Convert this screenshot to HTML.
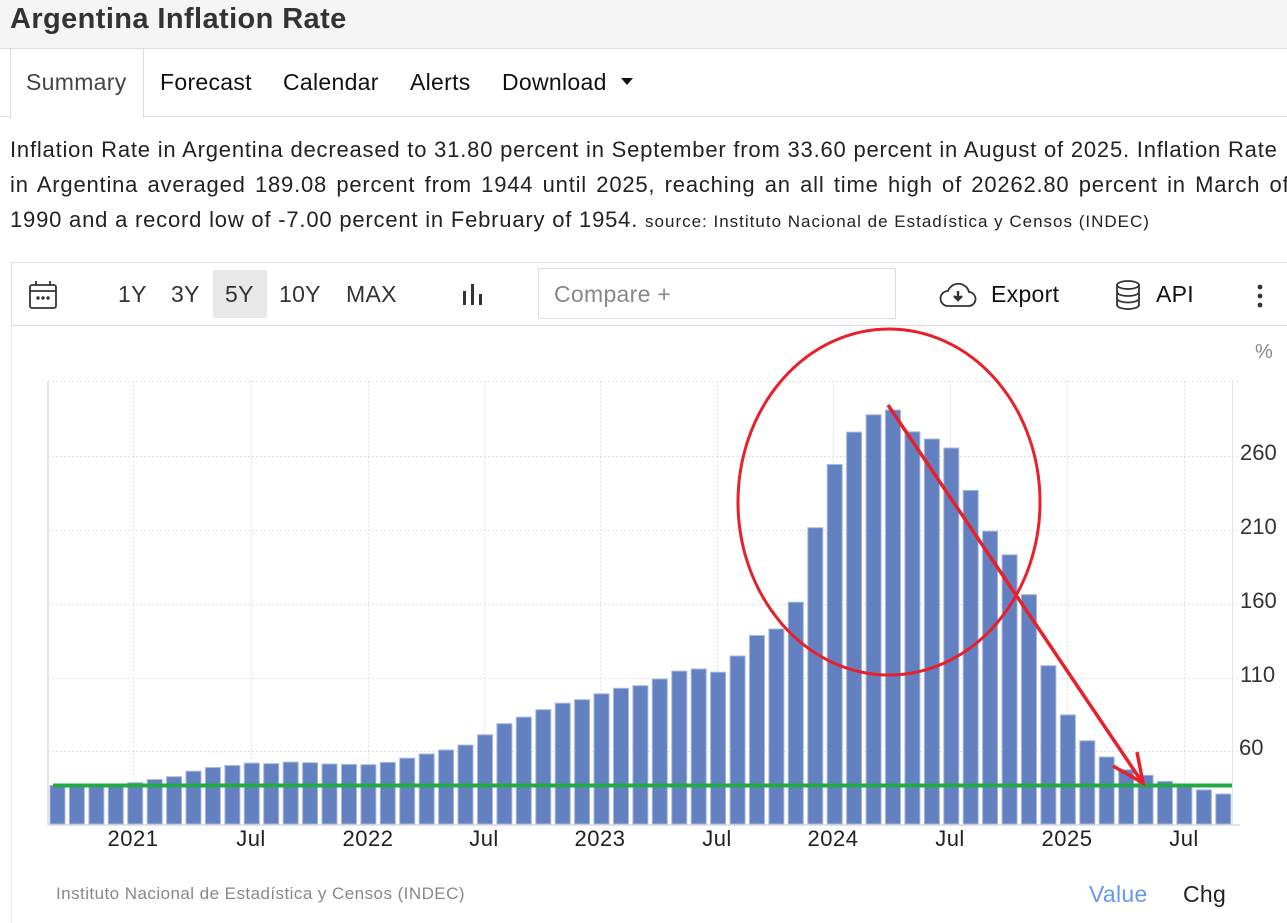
<!DOCTYPE html>
<html><head><meta charset="utf-8"><style>
*{margin:0;padding:0;box-sizing:border-box}
body{width:1287px;height:923px;overflow:hidden;background:#fff;font-family:"Liberation Sans",sans-serif;color:#222;position:relative}
.a{position:absolute;white-space:nowrap}
.t{font-size:23px;letter-spacing:.3px}
</style></head><body>
<div class="a" style="left:0;top:0;width:1287px;height:49px;background:#f5f5f5;border-bottom:1px solid #ddd"></div>
<div class="a" style="left:10px;top:3px;font-size:29px;font-weight:bold;color:#333;letter-spacing:.4px">Argentina Inflation Rate</div>
<div class="a" style="left:0;top:116px;width:1287px;height:1px;background:#ddd"></div>
<div class="a" style="left:10px;top:49px;width:134px;height:69px;background:#fff;border-left:1px solid #ddd;border-right:1px solid #ddd"></div>
<div class="a t" style="left:26px;top:69px;color:#444">Summary</div>
<div class="a t" style="left:160px;top:69px;color:#111">Forecast</div>
<div class="a t" style="left:283px;top:69px;color:#111">Calendar</div>
<div class="a t" style="left:410px;top:69px;color:#111">Alerts</div>
<div class="a t" style="left:502px;top:69px;color:#111">Download</div>
<div class="a" style="left:621px;top:78px;width:0;height:0;border-left:6px solid transparent;border-right:6px solid transparent;border-top:7px solid #111"></div>
<div class="a" style="left:10px;top:132px;font-size:22px;line-height:35px;color:#222;letter-spacing:.8px">Inflation Rate in Argentina decreased to 31.80 percent in September from 33.60 percent in August of 2025. Inflation Rate</div>
<div class="a" style="left:10px;top:167px;font-size:22px;line-height:35px;color:#222;letter-spacing:.8px;word-spacing:2.4px">in Argentina averaged 189.08 percent from 1944 until 2025, reaching an all time high of 20262.80 percent in March of</div>
<div class="a" style="left:10px;top:202px;font-size:22px;line-height:35px;color:#222;letter-spacing:.8px">1990 and a record low of -7.00 percent in February of 1954. <span style="font-size:17px;letter-spacing:1px">source: Instituto Nacional de Estadística y Censos (INDEC)</span></div>
<div class="a" style="left:11px;top:262px;width:1290px;height:64px;border:1px solid #ddd"></div>
<div class="a" style="left:11px;top:325px;width:1px;height:598px;background:#eee"></div>
<svg class="a" style="left:28px;top:280px" width="30" height="30" viewBox="0 0 30 30" fill="none" stroke="#333" stroke-width="1.8"><rect x="2" y="5" width="26" height="23" rx="2"/><line x1="2" y1="11" x2="28" y2="11"/><line x1="8" y1="1" x2="8" y2="5"/><line x1="22" y1="1" x2="22" y2="5"/><circle cx="10" cy="18" r=".8" fill="#333"/><circle cx="15" cy="18" r=".8" fill="#333"/><circle cx="20" cy="18" r=".8" fill="#333"/></svg>
<div class="a" style="left:213px;top:270px;width:54px;height:48px;background:#e8e8e8"></div>
<div class="a t" style="left:118px;top:281px;color:#333">1Y</div>
<div class="a t" style="left:171px;top:281px;color:#333">3Y</div>
<div class="a t" style="left:225px;top:281px;color:#333">5Y</div>
<div class="a t" style="left:279px;top:281px;color:#333">10Y</div>
<div class="a t" style="left:346px;top:281px;color:#333">MAX</div>
<svg class="a" style="left:462px;top:282px" width="24" height="24"><rect x="1" y="9" width="3" height="14" fill="#333"/><rect x="9" y="2" width="3" height="21" fill="#333"/><rect x="17" y="12" width="3" height="11" fill="#333"/></svg>
<div class="a" style="left:538px;top:268px;width:358px;height:51px;border:1px solid #ddd"></div>
<div class="a t" style="left:554px;top:281px;color:#888">Compare +</div>
<svg class="a" style="left:939px;top:282px" width="38" height="26" viewBox="0 0 38 26" fill="none" stroke="#333" stroke-width="1.8"><path d="M9 24 H29 A7 7 0 0 0 30 10 A11 11 0 0 0 9 9 A7.5 7.5 0 0 0 9 24 Z"/><path d="M19 9 V18 M15 14 L19 18 L23 14" stroke-width="2.4" fill="#333"/></svg>
<div class="a t" style="left:991px;top:281px;color:#111">Export</div>
<svg class="a" style="left:1114px;top:280px" width="28" height="30" viewBox="0 0 28 30" fill="none" stroke="#333" stroke-width="1.8"><ellipse cx="14" cy="5" rx="11" ry="4"/><path d="M3 5 V25 A11 4 0 0 0 25 25 V5 M3 12 A11 4 0 0 0 25 12 M3 18.5 A11 4 0 0 0 25 18.5"/></svg>
<div class="a t" style="left:1156px;top:281px;color:#111">API</div>
<svg class="a" style="left:1256px;top:284px" width="8" height="24"><circle cx="4" cy="3" r="2.4" fill="#333"/><circle cx="4" cy="12" r="2.4" fill="#333"/><circle cx="4" cy="21" r="2.4" fill="#333"/></svg>
<div class="a" style="left:1255px;top:341px;font-size:20px;color:#888">%</div>
<svg class="a" style="left:0;top:0" width="1287" height="923">
<g stroke="#e2e2e2" stroke-dasharray="2,2" stroke-width="1">
<line x1="48" y1="381.5" x2="1240" y2="381.5"/><line x1="48" y1="456.5" x2="1240" y2="456.5"/><line x1="48" y1="530.5" x2="1240" y2="530.5"/><line x1="48" y1="604.5" x2="1240" y2="604.5"/><line x1="48" y1="678.5" x2="1240" y2="678.5"/><line x1="48" y1="751.5" x2="1240" y2="751.5"/>
<line x1="133.5" y1="381" x2="133.5" y2="824"/><line x1="251.5" y1="381" x2="251.5" y2="824"/><line x1="368.5" y1="381" x2="368.5" y2="824"/><line x1="484.5" y1="381" x2="484.5" y2="824"/><line x1="600.5" y1="381" x2="600.5" y2="824"/><line x1="717.5" y1="381" x2="717.5" y2="824"/><line x1="833.5" y1="381" x2="833.5" y2="824"/><line x1="950.5" y1="381" x2="950.5" y2="824"/><line x1="1067.5" y1="381" x2="1067.5" y2="824"/><line x1="1184.5" y1="381" x2="1184.5" y2="824"/>
</g>
<line x1="48" y1="381" x2="48" y2="825" stroke="#e4e4e4" stroke-width="2"/>
<line x1="1232.5" y1="381" x2="1232.5" y2="825" stroke="#e4e4e4"/>
<line x1="48" y1="825" x2="1240" y2="825" stroke="#e4e4e4" stroke-width="2"/>
<g fill="#6381c0" stroke="#a8b8de" stroke-width="1">
<rect x="50" y="785.5" width="15" height="38.5"/><rect x="69.4" y="784.6" width="15" height="39.4"/><rect x="88.9" y="786.7" width="15" height="37.3"/><rect x="108.3" y="786.3" width="15" height="37.7"/><rect x="127.7" y="782.7" width="15" height="41.3"/><rect x="147.2" y="779.5" width="15" height="44.5"/><rect x="166.6" y="776.7" width="15" height="47.3"/><rect x="186" y="771.2" width="15" height="52.8"/><rect x="205.4" y="767.5" width="15" height="56.5"/><rect x="224.9" y="765.5" width="15" height="58.5"/><rect x="244.3" y="763.1" width="15" height="60.9"/><rect x="263.7" y="763.7" width="15" height="60.3"/><rect x="283.2" y="762.1" width="15" height="61.9"/><rect x="302.6" y="762.7" width="15" height="61.3"/><rect x="322" y="764" width="15" height="60"/><rect x="341.5" y="764.4" width="15" height="59.6"/><rect x="360.9" y="764.7" width="15" height="59.3"/><rect x="380.3" y="762.4" width="15" height="61.6"/><rect x="399.7" y="758.2" width="15" height="65.8"/><rect x="419.2" y="754" width="15" height="70"/><rect x="438.6" y="750" width="15" height="74"/><rect x="458" y="745.1" width="15" height="78.9"/><rect x="477.5" y="734.8" width="15" height="89.2"/><rect x="496.9" y="723.7" width="15" height="100.3"/><rect x="516.3" y="717.1" width="15" height="106.9"/><rect x="535.8" y="709.7" width="15" height="114.3"/><rect x="555.2" y="703.2" width="15" height="120.8"/><rect x="574.6" y="699.7" width="15" height="124.3"/><rect x="594" y="693.8" width="15" height="130.2"/><rect x="613.5" y="688.3" width="15" height="135.7"/><rect x="632.9" y="685.7" width="15" height="138.3"/><rect x="652.3" y="679" width="15" height="145"/><rect x="671.8" y="671.1" width="15" height="152.9"/><rect x="691.2" y="669" width="15" height="155"/><rect x="710.6" y="672.2" width="15" height="151.8"/><rect x="730.1" y="656" width="15" height="168"/><rect x="749.5" y="635.5" width="15" height="188.5"/><rect x="768.9" y="629" width="15" height="195"/><rect x="788.3" y="602.2" width="15" height="221.8"/><rect x="807.8" y="527.7" width="15" height="296.3"/><rect x="827.2" y="464.5" width="15" height="359.5"/><rect x="846.6" y="432.1" width="15" height="391.9"/><rect x="866.1" y="414.8" width="15" height="409.2"/><rect x="885.5" y="410" width="15" height="414"/><rect x="904.9" y="431.8" width="15" height="392.2"/><rect x="924.4" y="439" width="15" height="385"/><rect x="943.8" y="448" width="15" height="376"/><rect x="963.2" y="490.4" width="15" height="333.6"/><rect x="982.6" y="531.2" width="15" height="292.8"/><rect x="1002.1" y="554.8" width="15" height="269.2"/><rect x="1021.5" y="594.6" width="15" height="229.4"/><rect x="1040.9" y="665.7" width="15" height="158.3"/><rect x="1060.4" y="714.9" width="15" height="109.1"/><rect x="1079.8" y="740.8" width="15" height="83.2"/><rect x="1099.2" y="757" width="15" height="67"/><rect x="1118.7" y="769.7" width="15" height="54.3"/><rect x="1138.1" y="775.3" width="15" height="48.7"/><rect x="1157.5" y="781.4" width="15" height="42.6"/><rect x="1176.9" y="785.5" width="15" height="38.5"/><rect x="1196.4" y="789.9" width="15" height="34.1"/><rect x="1215.8" y="794" width="15" height="30"/>
</g>
<line x1="53" y1="785.5" x2="1232" y2="785.5" stroke="#22aa44" stroke-width="4"/>
<ellipse cx="889" cy="502" rx="151" ry="173" fill="none" stroke="#e8202a" stroke-width="3"/>
<line x1="888" y1="405" x2="1142" y2="782" stroke="#e8202a" stroke-width="3.5"/>
<path d="M1113 766 L1143 783 L1137 752" fill="none" stroke="#e8202a" stroke-width="3.5"/>
<g font-family="Liberation Sans, sans-serif" font-size="22" fill="#222" text-anchor="middle" letter-spacing=".5">
<text x="133" y="846">2021</text><text x="251" y="846">Jul</text><text x="368" y="846">2022</text><text x="484" y="846">Jul</text><text x="600" y="846">2023</text><text x="717" y="846">Jul</text><text x="833" y="846">2024</text><text x="950" y="846">Jul</text><text x="1067" y="846">2025</text><text x="1184" y="846">Jul</text>
</g>
<g font-family="Liberation Sans, sans-serif" font-size="22" fill="#333">
<text x="1240" y="460">260</text><text x="1240" y="534">210</text><text x="1240" y="608">160</text><text x="1240" y="682">110</text><text x="1239" y="755">60</text>
</g>
</svg>
<div class="a" style="left:56px;top:884px;font-size:17px;color:#888;letter-spacing:.45px">Instituto Nacional de Estadística y Censos (INDEC)</div>
<div class="a t" style="left:1089px;top:881px;color:#6699ee">Value</div>
<div class="a t" style="left:1183px;top:881px;color:#222">Chg</div>
</body></html>
